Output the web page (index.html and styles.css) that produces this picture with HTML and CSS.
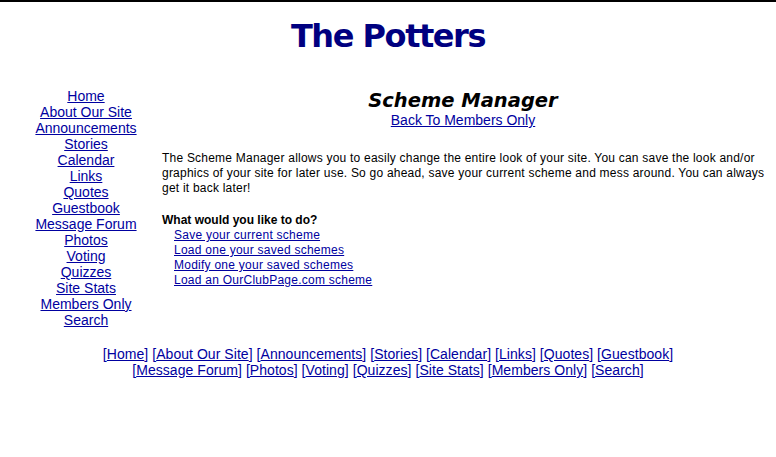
FILE: index.html
```html
<!DOCTYPE html>
<html>
<head>
<meta charset="utf-8">
<title>The Potters</title>
<link rel="stylesheet" href="styles.css">
</head>
<body>
<div class="page">
  <h1 class="site-title">The Potters</h1>
  <div class="layout">
    <nav class="side-nav">
      <a href="#">Home</a>
      <a href="#">About Our Site</a>
      <a href="#">Announcements</a>
      <a href="#">Stories</a>
      <a href="#">Calendar</a>
      <a href="#">Links</a>
      <a href="#">Quotes</a>
      <a href="#">Guestbook</a>
      <a href="#">Message Forum</a>
      <a href="#">Photos</a>
      <a href="#">Voting</a>
      <a href="#">Quizzes</a>
      <a href="#">Site Stats</a>
      <a href="#">Members Only</a>
      <a href="#">Search</a>
    </nav>
    <main class="content">
      <h2 class="page-title">Scheme Manager</h2>
      <div class="back"><a href="#">Back To Members Only</a></div>
      <p class="intro">The Scheme Manager allows you to easily change the entire look of your site. You can save the look and/or graphics of your site for later use. So go ahead, save your current scheme and mess around. You can always get it back later!</p>
      <div class="question">What would you like to do?</div>
      <ul class="actions">
        <li><a href="#">Save your current scheme</a></li>
        <li><a href="#">Load one your saved schemes</a></li>
        <li><a href="#">Modify one your saved schemes</a></li>
        <li><a href="#">Load an OurClubPage.com scheme</a></li>
      </ul>
    </main>
  </div>
  <div class="footer-nav">
    [<a href="#">Home</a>] [<a href="#">About Our Site</a>] [<a href="#">Announcements</a>] [<a href="#">Stories</a>] [<a href="#">Calendar</a>] [<a href="#">Links</a>] [<a href="#">Quotes</a>] [<a href="#">Guestbook</a>] [<a href="#">Message Forum</a>] [<a href="#">Photos</a>] [<a href="#">Voting</a>] [<a href="#">Quizzes</a>] [<a href="#">Site Stats</a>] [<a href="#">Members Only</a>] [<a href="#">Search</a>]
  </div>
</div>
</body>
</html>
```
FILE: styles.css
```css
html, body {
  margin: 0;
  padding: 0;
  background: #ffffff;
}

body {
  font-family: "Liberation Sans", Arial, sans-serif;
  color: #000000;
  border-top: 2px solid #000000;
}

a {
  color: #0000a0;
  text-decoration: underline;
}

.site-title {
  margin: 0;
  padding-top: 14px;
  text-align: center;
  font-family: "DejaVu Sans", Verdana, sans-serif;
  font-weight: bold;
  font-size: 32px;
  line-height: 40px;
  letter-spacing: -1.45px;
  color: #000080;
}

.layout {
  display: flex;
  margin-top: 32px;
}

.side-nav {
  width: 152px;
  margin-left: 10px;
  display: flex;
  flex-direction: column;
  align-items: center;
  font-size: 14px;
  line-height: 16px;
}

.content {
  width: 602px;
}

.page-title {
  margin: 2px 0 0;
  text-align: center;
  font-family: "DejaVu Sans", Verdana, sans-serif;
  font-weight: bold;
  font-style: italic;
  font-size: 19.5px;
  line-height: 22px;
}

.back {
  text-align: center;
  font-size: 14px;
  line-height: 16px;
}

.intro {
  margin: 23px -10px 0 0;
  font-size: 12px;
  line-height: 15px;
  letter-spacing: 0.22px;
}

.question {
  margin-top: 17px;
  font-size: 12px;
  line-height: 15px;
  font-weight: bold;
}

.actions {
  list-style: none;
  margin: 0;
  padding: 0 0 0 12px;
  font-size: 12px;
  line-height: 15px;
  letter-spacing: 0.25px;
}

.footer-nav {
  width: 600px;
  margin: 18px auto 0;
  text-align: center;
  font-size: 14px;
  line-height: 16px;
  letter-spacing: 0.05px;
  color: #0000a0;
}
```
